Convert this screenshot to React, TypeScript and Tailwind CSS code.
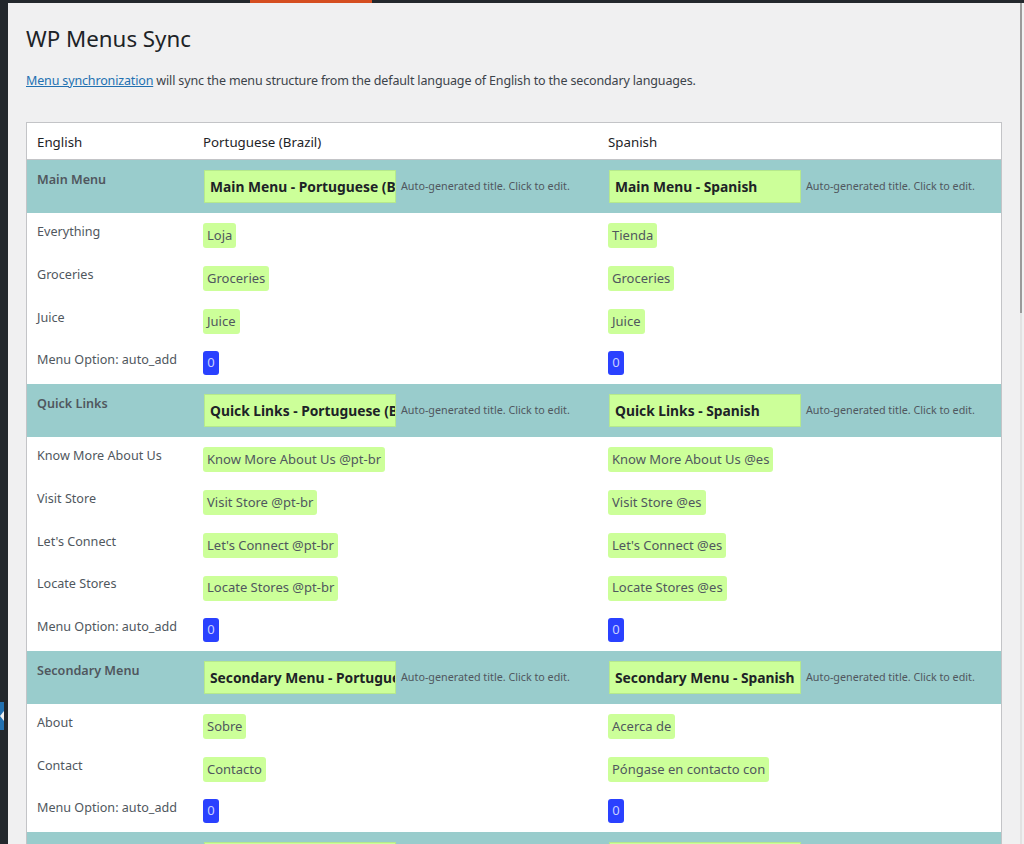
const font = { fontFamily: '"Noto Sans", "Open Sans", sans-serif' };

type Menu = {
  name: string;
  pt: string;
  es: string;
  items: [string, string, string][];
};

const menus: Menu[] = [
  {
    name: "Main Menu",
    pt: "Main Menu - Portuguese (Brazil)",
    es: "Main Menu - Spanish",
    items: [
      ["Everything", "Loja", "Tienda"],
      ["Groceries", "Groceries", "Groceries"],
      ["Juice", "Juice", "Juice"],
    ],
  },
  {
    name: "Quick Links",
    pt: "Quick Links - Portuguese (Brazil)",
    es: "Quick Links - Spanish",
    items: [
      ["Know More About Us", "Know More About Us @pt-br", "Know More About Us @es"],
      ["Visit Store", "Visit Store @pt-br", "Visit Store @es"],
      ["Let's Connect", "Let's Connect @pt-br", "Let's Connect @es"],
      ["Locate Stores", "Locate Stores @pt-br", "Locate Stores @es"],
    ],
  },
  {
    name: "Secondary Menu",
    pt: "Secondary Menu - Portuguese (Brazil)",
    es: "Secondary Menu - Spanish",
    items: [
      ["About", "Sobre", "Acerca de"],
      ["Contact", "Contacto", "Póngase en contacto con"],
    ],
  },
  {
    name: "Footer Menu",
    pt: "Footer Menu - Portuguese (Brazil)",
    es: "Footer Menu - Spanish",
    items: [],
  },
];

function TitleCell({ value }: { value: string }) {
  return (
    <div className="mt-[10px] flex h-[33px] items-center pl-[11px]">
      <div className="h-[33px] w-[192px] shrink-0 overflow-hidden whitespace-nowrap border border-[#b6e98c] bg-[#ccff99] px-[5px] text-[13.8px] font-bold leading-[31px] text-[#1d2327]">
        {value}
      </div>
      <span className="ml-[5px] whitespace-nowrap text-[10.75px] text-[#50575e]">
        Auto-generated title. Click to edit.
      </span>
    </div>
  );
}

function Chip({ text }: { text: string }) {
  return (
    <div className="pl-[10px] pt-[9px]">
      <span className="inline-flex h-[25px] items-center rounded-[3px] bg-[#ccff99] px-[4px] text-[13px] text-[#50575e]">
        {text}
      </span>
    </div>
  );
}

function ZeroChip() {
  return (
    <div className="pl-[10px] pt-[8px]">
      <span className="inline-flex h-[24px] w-[16px] items-center justify-center rounded-[3px] bg-[#2a41ff] text-[13px] text-[#c9d0ff]">
        0
      </span>
    </div>
  );
}

function MenuBlock({ menu }: { menu: Menu }) {
  return (
    <>
      <div className="grid h-[53px] grid-cols-[166px_405px_1fr] bg-[#99cccc]">
        <div className="pl-[10px] pt-[10px] text-[12.6px] font-semibold leading-[20px] text-[#50575e]">
          {menu.name}
        </div>
        <TitleCell value={menu.pt} />
        <TitleCell value={menu.es} />
      </div>
      {menu.items.map(([en, pt, es]) => (
        <div key={en} className="grid h-[42.75px] grid-cols-[166px_405px_1fr] bg-white">
          <div className="pl-[10px] pt-[9px] text-[12.6px] leading-[20px] text-[#50575e]">{en}</div>
          <Chip text={pt} />
          <Chip text={es} />
        </div>
      ))}
      {menu.items.length > 0 && (
        <div className="grid h-[42.75px] grid-cols-[166px_405px_1fr] bg-white">
          <div className="pl-[10px] pt-[9px] text-[12.6px] leading-[20px] text-[#50575e]">
            Menu Option: auto_add
          </div>
          <ZeroChip />
          <ZeroChip />
        </div>
      )}
    </>
  );
}

export default function App() {
  return (
    <div className="flex h-[844px] w-[1024px] flex-col overflow-hidden bg-[#23282d]" style={font}>
      {/* top admin strip */}
      <div className="flex h-[3px] shrink-0">
        <div className="w-[250px]" />
        <div className="w-[122px] bg-[#d54e21]" />
      </div>

      <div className="flex min-h-0 flex-1">
        {/* left admin menu edge */}
        <div className="w-[8px] shrink-0 pt-[699px]">
          <svg width="8" height="28" viewBox="0 0 8 28">
            <rect x="0" y="0" width="4" height="28" fill="#2271b1" />
            <path d="M4 9 L0 14 L4 19 Z" fill="#f0f0f1" />
          </svg>
        </div>

        <div className="flex min-w-0 flex-1 bg-[#f0f0f1]">
          <div className="min-w-0 flex-1 pl-[18px] pr-[15px] pt-[21px]">
            <h1 className="h-[30px] text-[22.3px] leading-[30px] text-[#1d2327]">WP Menus Sync</h1>
            <p className="mt-[17px] text-[12.5px] leading-[20px] tracking-[-0.15px] text-[#3c434a]">
              <a className="text-[#2271b1] underline">Menu synchronization</a> will sync the menu structure from the
              default language of English to the secondary languages.
            </p>

            <div className="mt-[31px] border border-[#c3c4c7] bg-white">
              <div className="grid h-[37px] grid-cols-[166px_405px_1fr] border-b border-[#c3c4c7] text-[13.3px] leading-[38px] text-[#1d2327]">
                <div className="pl-[10px]">English</div>
                <div className="pl-[10px]">Portuguese (Brazil)</div>
                <div className="pl-[10px]">Spanish</div>
              </div>
              {menus.map((m) => (
                <MenuBlock key={m.name} menu={m} />
              ))}
            </div>
          </div>

          {/* thin scrollbar */}
          <div className="flex w-[7px] shrink-0 justify-center">
            <div className="flex w-[2px] flex-col">
              <div className="h-[310px] bg-[#9a9a9a]" />
              <div className="flex-1 bg-[#e2e2e2]" />
            </div>
          </div>
        </div>
      </div>
    </div>
  );
}
